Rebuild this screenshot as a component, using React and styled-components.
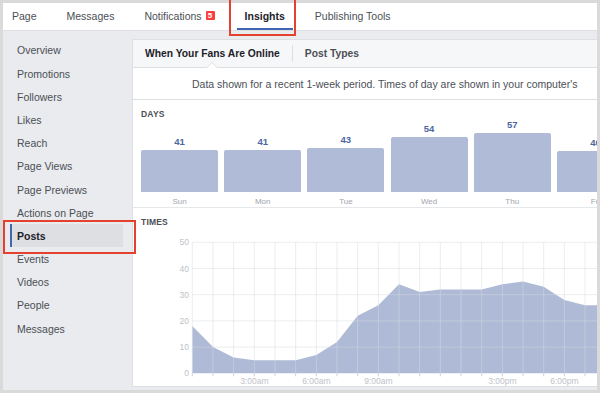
import React from "react";
import styled, { createGlobalStyle } from "styled-components";

const GlobalStyle = createGlobalStyle`
  body {
    margin: 0;
    font-family: "Liberation Sans", Arial, sans-serif;
  }
`;

const Wrapper = styled.div`
  position: relative;
  width: 600px;
  height: 393px;
  overflow: hidden;
`;

const Frame = styled.div`
  width: 600px;
  height: 393px;
  box-sizing: border-box;
  border: 3px solid #dadada;
  background: #e9ebee;
  overflow: hidden;
  display: flex;
  flex-direction: column;
  font-family: "Liberation Sans", Arial, sans-serif;
`;

const TopNav = styled.div`
  height: 28px;
  flex-shrink: 0;
  box-sizing: border-box;
  background: #fff;
  border-bottom: 1px solid #dddfe2;
  display: flex;
  gap: 14px;
  padding-left: 1px;
`;

const NavTab = styled.div`
  display: flex;
  align-items: center;
  padding: 0 8px;
  box-sizing: border-box;
  border-bottom: 2px solid ${({ $active }) => ($active ? "#4267b2" : "transparent")};
  font-size: 10.5px;
  font-weight: ${({ $active }) => ($active ? 700 : 400)};
  color: ${({ $active }) => ($active ? "#1d2129" : "#4b4f56")};
  white-space: nowrap;
`;

const Badge = styled.span`
  display: inline-flex;
  align-items: center;
  justify-content: center;
  margin-left: 4px;
  width: 9px;
  height: 9px;
  background: #fa3e3e;
  color: #fff;
  font-size: 8px;
  font-weight: 700;
  border-radius: 1px;
`;

const Body = styled.div`
  flex: 1;
  display: flex;
  min-height: 0;
`;

const Sidebar = styled.div`
  width: 129px;
  flex-shrink: 0;
  padding-top: 7.8px;
  display: flex;
  flex-direction: column;
`;

const SideItem = styled.div`
  height: 23.2px;
  flex-shrink: 0;
  margin-left: 7px;
  width: 113px;
  box-sizing: border-box;
  display: flex;
  align-items: center;
  padding-left: ${({ $active }) => ($active ? "5px" : "7px")};
  border-left: ${({ $active }) => ($active ? "2px solid #4267b2" : "none")};
  background: ${({ $active }) => ($active ? "#dddfe2" : "transparent")};
  font-size: 10.5px;
  font-weight: ${({ $active }) => ($active ? 700 : 400)};
  color: ${({ $active }) => ($active ? "#1d2129" : "#4b4f56")};
`;

const Panel = styled.div`
  width: 480px;
  flex-shrink: 0;
  margin-top: 8px;
  height: 348px;
  box-sizing: border-box;
  background: #fff;
  border: 1px solid #dddfe2;
  display: flex;
  flex-direction: column;
`;

const PanelHeader = styled.div`
  height: 28px;
  flex-shrink: 0;
  box-sizing: border-box;
  background: #f6f7f9;
  border-bottom: 1px solid #dddfe2;
  display: flex;
  align-items: center;
`;

const HeaderTab = styled.div`
  position: relative;
  height: 100%;
  display: flex;
  align-items: center;
  padding: 0 12px;
  font-size: 10.3px;
  font-weight: 700;
  color: ${({ $active }) => ($active ? "#1d2129" : "#4b4f56")};

  ${({ $active }) =>
    $active &&
    `
    &::before, &::after {
      content: "";
      position: absolute;
      left: 50%;
      bottom: -1px;
      width: 0;
      height: 0;
      border-style: solid;
    }
    &::before {
      margin-left: -6px;
      border-width: 0 6px 6px 6px;
      border-color: transparent transparent #dddfe2 transparent;
    }
    &::after {
      margin-left: -5px;
      bottom: -1px;
      border-width: 0 5px 5px 5px;
      border-color: transparent transparent #fff transparent;
    }
  `}
`;

const HeaderSep = styled.div`
  width: 1px;
  height: 17px;
  background: #dddfe2;
`;

const Notice = styled.div`
  height: 32px;
  flex-shrink: 0;
  box-sizing: border-box;
  border-bottom: 1px solid #dddfe2;
  display: flex;
  align-items: center;
  padding-left: 59px;
  font-size: 10.5px;
  color: #4b4f56;
  white-space: nowrap;
`;

const Section = styled.div`
  flex-shrink: 0;
  box-sizing: border-box;
  border-bottom: ${({ $last }) => ($last ? "none" : "1px solid #e5e7eb")};
  height: ${({ $h }) => $h};
  flex: ${({ $last }) => ($last ? 1 : "none")};
  overflow: hidden;
`;

const SectionTitle = styled.div`
  padding: 8px 0 0 8px;
  line-height: 12px;
  font-size: 8.5px;
  font-weight: 700;
  color: #4b4f56;
  letter-spacing: 0.2px;
`;

const BarsRow = styled.div`
  height: 87px;
  display: flex;
  align-items: flex-end;
  gap: 6.2px;
  padding-left: 8px;
`;

const BarCol = styled.div`
  width: 77px;
  flex-shrink: 0;
  display: flex;
  flex-direction: column;
  align-items: center;
`;

const BarValue = styled.div`
  line-height: 11px;
  margin-bottom: 3px;
  font-size: 9.5px;
  font-weight: 700;
  color: #4b67a1;
`;

const Bar = styled.div`
  width: 100%;
  background: #afbbd7;
  border-radius: 2px 2px 0 0;
`;

const DayLabel = styled.div`
  margin-top: 4px;
  line-height: 11px;
  font-size: 8px;
  color: #a0a5ae;
`;

const Highlight = styled.div`
  position: absolute;
  box-sizing: border-box;
  border: 2px solid #e4412f;
  pointer-events: none;
`;

const navTabs = ["Page", "Messages", "Notifications", "Insights", "Publishing Tools"];

const sideItems = [
  "Overview",
  "Promotions",
  "Followers",
  "Likes",
  "Reach",
  "Page Views",
  "Page Previews",
  "Actions on Page",
  "Posts",
  "Events",
  "Videos",
  "People",
  "Messages",
];

const days = [
  { day: "Sun", value: 41 },
  { day: "Mon", value: 41 },
  { day: "Tue", value: 43 },
  { day: "Wed", value: 54 },
  { day: "Thu", value: 57 },
  { day: "Fri", value: 40 },
];

const hours = [18, 10, 6, 5, 5, 5, 7, 12, 22, 26, 34, 31, 32, 32, 32, 34, 35, 33, 28, 26, 26, 26];

const X0 = 59.3;
const STEP = 20.67;
const Y0 = 145.3;
const SCALE = 2.62;

const TimesChart = () => {
  const pts = hours.map((v, i) => [X0 + STEP * i, Y0 - SCALE * v]);
  const area =
    `M${X0},${Y0} ` +
    pts.map(([x, y]) => `L${x.toFixed(1)},${y.toFixed(1)}`).join(" ") +
    ` L${pts[pts.length - 1][0].toFixed(1)},${Y0} Z`;
  const grid = "rgba(215,219,226,0.5)";
  const xLabels = [
    [3, "3:00am"],
    [6, "6:00am"],
    [9, "9:00am"],
    [15, "3:00pm"],
    [18, "6:00pm"],
  ];
  return (
    <svg width="478" height="158" style={{ display: "block" }}>
      <path d={area} fill="#aebad6" />
      {[0, 10, 20, 30, 40, 50].map((v) => (
        <g key={v}>
          {v > 0 && (
            <line x1={X0} x2="478" y1={Y0 - SCALE * v} y2={Y0 - SCALE * v} stroke={grid} />
          )}
          <text
            x="56"
            y={Y0 - SCALE * v + 3}
            textAnchor="end"
            fontSize="8.5"
            fill="#bec3c9"
            fontFamily="Liberation Sans, Arial, sans-serif"
          >
            {v}
          </text>
        </g>
      ))}
      {hours.map((_, i) => {
        const x = X0 + STEP * i;
        return (
          <g key={i}>
            <line x1={x} x2={x} y1={Y0 - SCALE * 50} y2={Y0} stroke={grid} />
            <line x1={x} x2={x} y1={Y0} y2={Y0 + 3} stroke="#ccd0d5" />
          </g>
        );
      })}
      {xLabels.map(([h, t]) => (
        <text
          key={t}
          x={X0 + STEP * h}
          y="156"
          textAnchor="middle"
          fontSize="8.5"
          fill="#bec3c9"
          fontFamily="Liberation Sans, Arial, sans-serif"
        >
          {t}
        </text>
      ))}
    </svg>
  );
};

const App = () => {
  return (
    <Wrapper>
      <GlobalStyle />
      <Frame>
        <TopNav>
          {navTabs.map((t) => (
            <NavTab key={t} $active={t === "Insights"}>
              {t}
              {t === "Notifications" && <Badge>5</Badge>}
            </NavTab>
          ))}
        </TopNav>
        <Body>
          <Sidebar>
            {sideItems.map((s, i) => (
              <SideItem key={i} $active={s === "Posts"}>
                {s}
              </SideItem>
            ))}
          </Sidebar>
          <Panel>
            <PanelHeader>
              <HeaderTab $active>When Your Fans Are Online</HeaderTab>
              <HeaderSep />
              <HeaderTab>Post Types</HeaderTab>
            </PanelHeader>
            <Notice>
              Data shown for a recent 1-week period. Times of day are shown in your computer's
            </Notice>
            <Section $h="108px">
              <SectionTitle>DAYS</SectionTitle>
              <BarsRow>
                {days.map((d) => (
                  <BarCol key={d.day}>
                    <BarValue>{d.value}</BarValue>
                    <Bar style={{ height: `${d.value * 1.028}px` }} />
                    <DayLabel>{d.day}</DayLabel>
                  </BarCol>
                ))}
              </BarsRow>
            </Section>
            <Section $last>
              <SectionTitle>TIMES</SectionTitle>
              <TimesChart />
            </Section>
          </Panel>
        </Body>
      </Frame>
      <Highlight style={{ left: 229, top: -2, width: 67, height: 38 }} />
      <Highlight style={{ left: 3, top: 220, width: 133, height: 34 }} />
    </Wrapper>
  );
};

export default App;
